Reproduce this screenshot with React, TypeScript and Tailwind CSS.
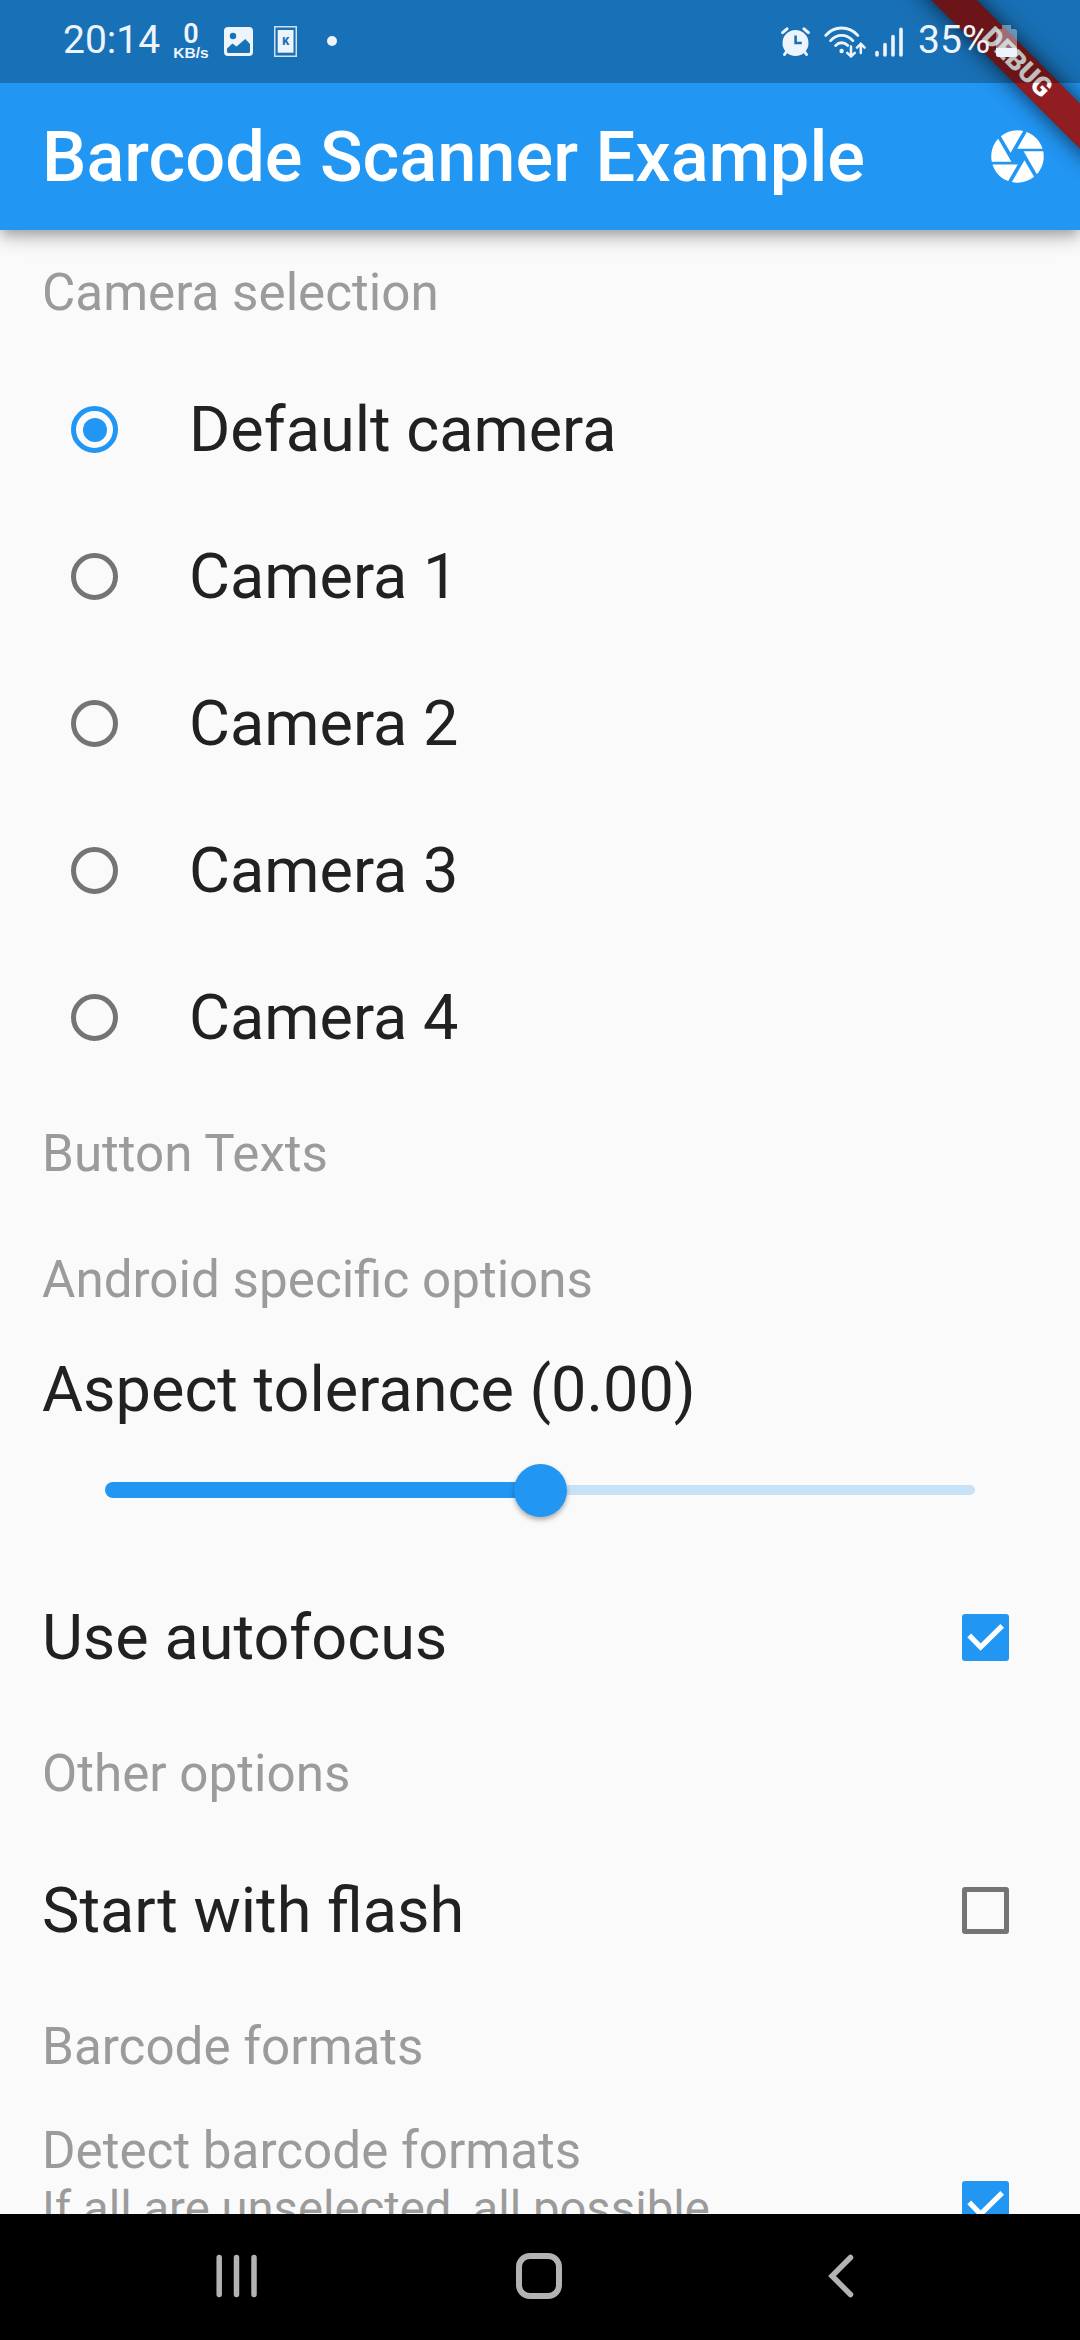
import type { ReactNode } from "react";

function SectionHeader({ children }: { children: ReactNode }) {
  return (
    <div className="flex h-[126px] shrink-0 items-center px-[42px] text-[51.2px] leading-[60px] whitespace-nowrap text-[#9b9b9b]">
      {children}
    </div>
  );
}

function RadioRow({ label, selected }: { label: string; selected?: boolean }) {
  return (
    <div className="flex h-[147px] shrink-0 items-center pl-[71px]">
      <span
        className={
          selected
            ? "flex size-[47px] items-center justify-center rounded-full border-[5px] border-[#2196f3]"
            : "size-[47px] rounded-full border-[5px] border-[#747474]"
        }
      >
        {selected && <span className="size-[24px] rounded-full bg-[#2196f3]" />}
      </span>
      <span className="ml-[71px] text-[63px] leading-[74px] whitespace-nowrap">{label}</span>
    </div>
  );
}

function Checkbox({ checked }: { checked?: boolean }) {
  if (!checked) {
    return <span className="size-[47px] shrink-0 rounded-[3px] border-[5px] border-[#747474]" />;
  }
  return (
    <span className="size-[47px] shrink-0 rounded-[3px] bg-[#2196f3]">
      <svg viewBox="0 0 47 47" className="size-full" fill="none" stroke="#fff" strokeWidth="5.25">
        <path d="M7.2 21.3 18.6 33 40.2 11.8" />
      </svg>
    </span>
  );
}

function CheckRow({ label, checked }: { label: string; checked?: boolean }) {
  return (
    <div className="flex h-[147px] shrink-0 items-center justify-between pr-[71px] pl-[42px]">
      <span className="text-[63px] leading-[74px] whitespace-nowrap">{label}</span>
      <Checkbox checked={checked} />
    </div>
  );
}

function StatusBar() {
  return (
    <div className="relative z-20 flex h-[83px] items-center bg-black/25 text-[#eef4fc]">
      <span className="mb-[3px] ml-[63px] w-[100px] text-[39px] leading-[46px] whitespace-nowrap">20:14</span>
      <span className="ml-[9px] flex w-[38px] flex-col items-center whitespace-nowrap">
        <span className="pt-px text-[27px] leading-[22px] font-semibold">0</span>
        <span className="font-['Liberation_Sans',sans-serif] text-[15.5px] leading-[16px] font-bold">KB/s</span>
      </span>
      <svg viewBox="0 0 29 29" className="ml-[14px] size-[29px]">
        <rect width="29" height="29" rx="4" fill="currentColor" />
        <circle cx="9" cy="9" r="3.2" fill="#1971b6" />
        <path d="M3 21.5 8.5 16.5 12.5 19.5 21.3 12 26 17v7.5q0 1.5-1.5 1.5h-20Q3 26 3 24.5z" fill="#1971b6" />
      </svg>
      <svg viewBox="0 0 23 31" className="ml-[21px] h-[31px] w-[23px]">
        <rect x=".75" y=".75" width="21.5" height="29.5" fill="none" stroke="currentColor" strokeWidth="1.5" opacity=".85" />
        <rect x="3.7" y="4" width="15.8" height="22.7" fill="currentColor" />
        <text x="11.7" y="19" textAnchor="middle" fontSize="11" fontWeight="900" fill="#1971b6" fontFamily="Roboto, sans-serif">
          K
        </text>
      </svg>
      <span className="mb-[2px] ml-[30px] size-[10px] rounded-full bg-current" />

      <svg viewBox="0 0 29 30" className="ml-auto h-[30px] w-[29px]" fill="none" stroke="currentColor" strokeLinecap="round">
        <circle cx="14.5" cy="16" r="13" fill="currentColor" stroke="none" />
        <path d="M1.6 5.6 6 1.8M27.4 5.6 23 1.8M6 24 3.5 27.5M23 24l2.5 3.5" strokeWidth="3" />
        <path d="M14.6 8.500v7.500h6.200" stroke="#1971b6" strokeWidth="2.6" strokeLinecap="butt" />
      </svg>
      <svg viewBox="0 0 42 32" className="ml-[14px] h-[32px] w-[42px]" fill="none" stroke="currentColor" strokeWidth="2.8" strokeLinecap="round">
        <path d="M1.8 9.4C10-.5 25-.5 33.8 9.4M6.6 14.6c6.2-7 16-7 22.2 0M11.6 19.6c3.6-3.8 8.4-3.8 12.2 0" />
        <circle cx="17.6" cy="25" r="2.2" fill="currentColor" stroke="none" />
        <path d="M27 20.5v9.5M23.2 26.8 27 30.4l3.8-3.6M36.8 27v-8.6M33 21.6l3.8-3.8 3.8 3.8" strokeWidth="2.5" />
      </svg>
      <svg viewBox="0 0 28 30" className="ml-[9px] h-[30px] w-[28px]" stroke="currentColor" strokeWidth="3.6" strokeLinecap="round">
        <path d="M2 25.5v2.4M10 17.5v10.4M18 9.5v18.4M26 2.2v25.7" />
      </svg>
      <span className="mb-[3px] ml-[15px] w-[74px] text-[39px] leading-[46px] whitespace-nowrap">35%</span>
      <svg viewBox="0 0 21 33" className="mr-[63px] ml-[4px] h-[33px] w-[21px]" fill="currentColor">
        <path d="M6 0h9v4h3.500q2.500 0 2.500 2.500v16.500h-21v-16.500q0-2.500 2.500-2.500h3.500z" opacity=".4" />
        <path d="M0 23h21v6.500q0 2.500-2.500 2.500h-16q-2.500 0-2.500-2.500z" />
      </svg>
    </div>
  );
}

function AppBar() {
  return (
    <div className="flex h-[147px] items-center justify-between pr-[31px] pl-[42px] text-white">
      <h1 className="text-[70.35px] leading-[82px] font-medium whitespace-nowrap">Barcode Scanner Example</h1>
      <svg viewBox="0 0 24 24" className="size-[63px]" fill="currentColor">
        <path d="M9.400 10.500l4.770-8.260C13.470 2.090 12.750 2 12 2c-2.400 0-4.600.850-6.320 2.250l3.660 6.350.060-.100zM21.540 9c-.920-2.920-3.150-5.260-6-6.340L11.880 9h9.660zm.260 1h-7.490l.290.500 4.760 8.250C21 16.970 22 14.610 22 12c0-.690-.070-1.350-.200-2zM8.540 12l-3.900-6.750C3.010 7.030 2 9.390 2 12c0 .690.070 1.350.200 2h7.490l-1.150-2zm-6.080 3c.920 2.920 3.150 5.260 6 6.340L12.120 15H2.460zm11.270 0l-3.900 6.760c.700.150 1.420.240 2.170.240 2.400 0 4.600-.850 6.320-2.250l-3.660-6.350-.930 1.600z" />
      </svg>
    </div>
  );
}

function DebugBanner() {
  return (
    <div className="pointer-events-none absolute top-0 right-0 z-10 size-[230px] overflow-hidden">
      <div className="absolute top-[47.4px] left-[42.200px] flex h-[31.5px] w-[250px] rotate-45 items-center justify-center bg-[#8f1d22] text-[26.8px] leading-[27px] font-black text-white shadow-[0_0_22px_rgba(0,0,0,0.7)]">
        DEBUG
      </div>
    </div>
  );
}

export default function App() {
  return (
    <div className="flex h-[2340px] w-[1080px] flex-col overflow-hidden bg-[#fafafa] font-[Roboto,sans-serif] text-[#212121]">
      <header className="relative z-10 shrink-0 bg-[#2196f3] shadow-[0_5px_10px_-3px_rgba(0,0,0,0.2),0_10px_13px_0_rgba(0,0,0,0.14),0_3px_26px_0_rgba(0,0,0,0.12)]">
        <StatusBar />
        <AppBar />
        <DebugBanner />
      </header>

      <main className="flex h-[1984px] shrink-0 flex-col overflow-hidden">
        <SectionHeader>Camera selection</SectionHeader>
        <RadioRow label="Default camera" selected />
        <RadioRow label="Camera 1" />
        <RadioRow label="Camera 2" />
        <RadioRow label="Camera 3" />
        <RadioRow label="Camera 4" />

        <SectionHeader>Button Texts</SectionHeader>
        <SectionHeader>Android specific options</SectionHeader>
        <div className="flex h-[221px] shrink-0 flex-col pt-[10px]">
          <span className="px-[42px] text-[63px] leading-[74px] whitespace-nowrap">Aspect tolerance (0.00)</span>
          <div className="mt-[36.500px] ml-[105px] flex h-[53px] w-[870px] items-center">
            <span className="-mr-[10px] h-[16px] w-[418.500px] rounded-l-full bg-[#2196f3]" />
            <span className="relative size-[53px] shrink-0 rounded-full bg-[#2196f3] shadow-[0_3px_5px_rgba(0,0,0,0.3)]" />
            <span className="h-[10.500px] flex-1 rounded-r-full bg-[#c7e1f7]" />
          </div>
        </div>
        <CheckRow label="Use autofocus" checked />

        <SectionHeader>Other options</SectionHeader>
        <CheckRow label="Start with flash" />

        <SectionHeader>Barcode formats</SectionHeader>
        <div className="flex shrink-0 items-start justify-between pt-[10px] pr-[71px] pl-[42px] text-[#9b9b9b]">
          <div className="flex flex-col whitespace-nowrap">
            <span className="text-[51.2px] leading-[61px]">Detect barcode formats</span>
            <span className="text-[47.25px] leading-[57px]">If all are unselected, all possible</span>
          </div>
          <div className="mt-[61px] flex">
            <Checkbox checked />
          </div>
        </div>
      </main>

      <nav className="flex h-[126px] shrink-0 items-center bg-black pb-[3px] text-[#b3b3b3]">
        <svg viewBox="0 0 42 44" className="ml-[216px] h-[44px] w-[42px]" stroke="currentColor" strokeWidth="5.5" strokeLinecap="round">
          <path d="M3.200 3.500v37M20.500 3.500v37M38 3.500v37" />
        </svg>
        <span className="ml-[258px] size-[46px] rounded-[14px] border-[6px] border-current" />
        <svg viewBox="0 0 26 44" className="ml-[266px] h-[44px] w-[26px]" fill="none" stroke="currentColor" strokeWidth="5.5" strokeLinecap="round">
          <path d="M22.500 3.500 4 22l18.500 18.500" />
        </svg>
      </nav>
    </div>
  );
}
